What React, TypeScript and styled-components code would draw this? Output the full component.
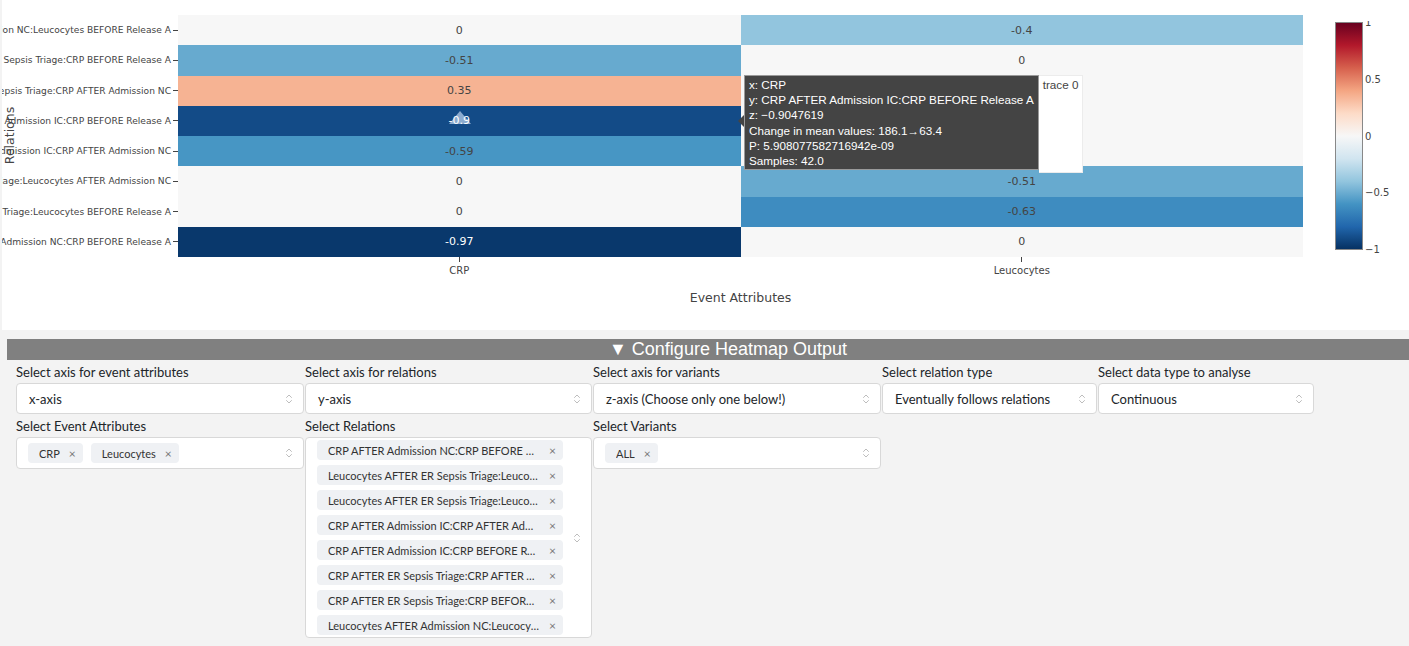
import React from "react";
import styled, { createGlobalStyle } from "styled-components";
import { ChevronsUpDown } from "lucide-react";

interface HeatRow {
  label: string;
  values: number[];
}

const columns = ["CRP", "Leucocytes"];

const rows: HeatRow[] = [
  { label: "Leucocytes AFTER Admission NC:Leucocytes BEFORE Release A", values: [0, -0.4] },
  { label: "CRP AFTER ER Sepsis Triage:CRP BEFORE Release A", values: [-0.51, 0] },
  { label: "CRP AFTER ER Sepsis Triage:CRP AFTER Admission NC", values: [0.35, 0] },
  { label: "CRP AFTER Admission IC:CRP BEFORE Release A", values: [-0.9, 0] },
  { label: "CRP AFTER Admission IC:CRP AFTER Admission NC", values: [-0.59, 0] },
  { label: "Leucocytes AFTER ER Sepsis Triage:Leucocytes AFTER Admission NC", values: [0, -0.51] },
  { label: "Leucocytes AFTER ER Sepsis Triage:Leucocytes BEFORE Release A", values: [0, -0.63] },
  { label: "CRP AFTER Admission NC:CRP BEFORE Release A", values: [-0.97, 0] },
];

const relations = [
  "CRP AFTER Admission NC:CRP BEFORE Release A",
  "Leucocytes AFTER ER Sepsis Triage:Leucocytes AFTER Admission NC",
  "Leucocytes AFTER ER Sepsis Triage:Leucocytes BEFORE Release A",
  "CRP AFTER Admission IC:CRP AFTER Admission NC",
  "CRP AFTER Admission IC:CRP BEFORE Release A",
  "CRP AFTER ER Sepsis Triage:CRP AFTER Admission NC",
  "CRP AFTER ER Sepsis Triage:CRP BEFORE Release A",
  "Leucocytes AFTER Admission NC:Leucocytes BEFORE Release A",
];

// colorbrewer RdBu, from -1 to 1
const RDBU = [
  [5, 48, 97],
  [33, 102, 172],
  [67, 147, 195],
  [146, 197, 222],
  [209, 229, 240],
  [247, 247, 247],
  [253, 219, 199],
  [244, 165, 130],
  [214, 96, 77],
  [178, 24, 43],
  [103, 0, 31],
];

const colorFor = (v: number) => {
  const t = ((v + 1) / 2) * (RDBU.length - 1);
  const i = Math.min(Math.floor(t), RDBU.length - 2);
  const f = t - i;
  const c = RDBU[i].map((a, k) => Math.round(a + (RDBU[i + 1][k] - a) * f));
  return `rgb(${c.join(",")})`;
};

const fmt = (v: number) => (v === 0 ? "0" : String(v));

const Colorbar = () => (
  <ColorbarSvg width="80" height="240" viewBox="0 0 80 240">
    <defs>
      <linearGradient id="rdbu" x1="0" y1="0" x2="0" y2="1">
        {RDBU.slice()
          .reverse()
          .map((c, i) => (
            <stop key={i} offset={`${i * 10}%`} stopColor={`rgb(${c.join(",")})`} />
          ))}
      </linearGradient>
    </defs>
    <rect x="0.5" y="1.5" width="27" height="227" fill="url(#rdbu)" stroke="#888" strokeWidth="1" />
    {["1", "0.5", "0", "\u22120.5", "\u22121"].map((t, i) => (
      <text key={t} x="30" y={1.5 + i * 56.75 + 3.5} fontSize="10" fill="#444" fontFamily="DejaVu Sans, sans-serif">
        {t}
      </text>
    ))}
  </ColorbarSvg>
);

const Chevron = () => <ChevronsUpDown size={12} strokeWidth={1.4} color="#a0a0a0" />;

const App = () => {
  return (
    <Page>
      <GlobalStyle />
      <PlotPanel>
        <YAxis>
          <YTitle>Relations</YTitle>
          {rows.map((r) => (
            <YTickRow key={r.label}>
              <YTickLabel>{r.label}</YTickLabel>
              <YTick />
            </YTickRow>
          ))}
        </YAxis>
        <Heatmap>
          {rows.map((r) =>
            r.values.map((v, j) => (
              <Cell key={r.label + j} $dark={Math.abs(v) > 0.75} style={{ background: colorFor(v) }}>
                <CellText>{fmt(v)}</CellText>
              </Cell>
            ))
          )}
        </Heatmap>
        <ColorbarCol>
          <Colorbar />
        </ColorbarCol>
        <XTicks>
          {columns.map((c) => (
            <XTickCol key={c}>
              <XTick />
              <TickLabel>{c}</TickLabel>
            </XTickCol>
          ))}
        </XTicks>
        <XTitle>Event Attributes</XTitle>

        <Cursor width="24" height="16" viewBox="0 0 24 16">
          <polygon points="12,1 23,14 1,14" fill="rgba(170,195,225,0.8)" />
        </Cursor>

        <Hover>
          <HoverArrow />
          <HoverBox>
            <div>x: CRP</div>
            <div>y: CRP AFTER Admission IC:CRP BEFORE Release A</div>
            <div>z: −0.9047619</div>
            <div>Change in mean values: 186.1→63.4</div>
            <div>P: 5.908077582716942e-09</div>
            <div>Samples: 42.0</div>
          </HoverBox>
          <HoverName>trace 0</HoverName>
        </Hover>
      </PlotPanel>

      <ConfigBar>▼ Configure Heatmap Output</ConfigBar>

      <Form>
        <Field>
          <Label>Select axis for event attributes</Label>
          <SelectBox>
            <span>x-axis</span>
            <Chevron />
          </SelectBox>
        </Field>
        <Field>
          <Label>Select axis for relations</Label>
          <SelectBox>
            <span>y-axis</span>
            <Chevron />
          </SelectBox>
        </Field>
        <Field>
          <Label>Select axis for variants</Label>
          <SelectBox>
            <span>z-axis (Choose only one below!)</span>
            <Chevron />
          </SelectBox>
        </Field>
        <Field>
          <Label>Select relation type</Label>
          <SelectBox>
            <span>Eventually follows relations</span>
            <Chevron />
          </SelectBox>
        </Field>
        <Field>
          <Label>Select data type to analyse</Label>
          <SelectBox>
            <span>Continuous</span>
            <Chevron />
          </SelectBox>
        </Field>

        <Field>
          <Label>Select Event Attributes</Label>
          <MultiBox>
            <Chips>
              {columns.map((c) => (
                <Chip key={c}>
                  <ChipText>{c}</ChipText>
                  <ChipRemove>×</ChipRemove>
                </Chip>
              ))}
            </Chips>
            <Chevron />
          </MultiBox>
        </Field>
        <Field>
          <Label>Select Relations</Label>
          <MultiBox $stacked>
            <Chips>
              {relations.map((r) => (
                <Chip key={r}>
                  <ChipText>{r}</ChipText>
                  <ChipRemove>×</ChipRemove>
                </Chip>
              ))}
            </Chips>
            <Chevron />
          </MultiBox>
        </Field>
        <Field>
          <Label>Select Variants</Label>
          <MultiBox>
            <Chips>
              <Chip>
                <ChipText>ALL</ChipText>
                <ChipRemove>×</ChipRemove>
              </Chip>
            </Chips>
            <Chevron />
          </MultiBox>
        </Field>
      </Form>
    </Page>
  );
};

const GlobalStyle = createGlobalStyle`
  html, body {
    margin: 0;
    padding: 0;
    background: #f3f3f3;
  }
  body {
    font-family: Lato, "Noto Sans", sans-serif;
    overflow: hidden;
  }
`;

const Page = styled.div`
  width: 1409px;
`;

const PlotPanel = styled.div`
  position: relative;
  margin-left: 2px;
  height: 330px;
  box-sizing: border-box;
  padding-top: 15px;
  background: #fff;
  display: grid;
  grid-template-columns: 176px 1125px 1fr;
  grid-template-rows: 242px auto auto;
  align-content: start;
  font-family: "DejaVu Sans", Verdana, sans-serif;
  color: #444;
`;

const YAxis = styled.div`
  position: relative;
  min-width: 0;
  display: grid;
  grid-template-columns: minmax(0, 1fr);
  grid-template-rows: repeat(8, 1fr);
  overflow: hidden;
`;

const YTitle = styled.div`
  position: absolute;
  left: -23px;
  top: 113px;
  width: 60px;
  text-align: center;
  font-size: 12.5px;
  transform: rotate(-90deg);
  color: #444;
`;

const YTickRow = styled.div`
  min-width: 0;
  overflow: hidden;
  display: flex;
  justify-content: flex-end;
  align-items: center;
  white-space: nowrap;
`;

const TickLabel = styled.span`
  flex: none;
  font-size: 10px;
  color: #444;
  white-space: nowrap;
`;

const YTickLabel = styled(TickLabel)`
  font-size: 9.1px;
`;

const YTick = styled.span`
  flex: none;
  width: 5px;
  height: 1px;
  margin-left: 2px;
  background: #444;
`;

const Heatmap = styled.div`
  display: grid;
  grid-template-columns: repeat(2, 1fr);
  grid-template-rows: repeat(8, 1fr);
`;

const Cell = styled.div<{ $dark: boolean }>`
  display: flex;
  align-items: center;
  justify-content: center;
  font-size: 11px;
  color: ${(p) => (p.$dark ? "#fff" : "#444")};
`;

const CellText = styled.span`
  position: relative;
  z-index: 2;
`;

const ColorbarCol = styled.div`
  grid-row: 1 / 4;
  grid-column: 3;
  padding: 6px 0 0 32px;
`;

const ColorbarSvg = styled.svg`
  display: block;
`;

const XTicks = styled.div`
  grid-column: 2;
  display: grid;
  grid-template-columns: repeat(2, 1fr);
`;

const XTickCol = styled.div`
  display: flex;
  flex-direction: column;
  align-items: center;
`;

const XTick = styled.span`
  width: 1px;
  height: 5px;
  background: #444;
  margin-bottom: 3px;
`;

const XTitle = styled.div`
  grid-column: 2;
  text-align: center;
  font-size: 12.5px;
  margin-top: 14px;
`;

const Cursor = styled.svg`
  position: absolute;
  z-index: 1;
  left: 446px;
  top: 110px;
`;

const Hover = styled.div`
  position: absolute;
  z-index: 3;
  left: 736px;
  top: 75px;
  display: flex;
  align-items: flex-start;
  font-family: "Liberation Sans", Arial, sans-serif;
  font-size: 11.7px;
`;

const HoverArrow = styled.span`
  margin-top: 40px;
  width: 0;
  height: 0;
  border-top: 6px solid transparent;
  border-bottom: 6px solid transparent;
  border-right: 6px solid #444;
`;

const HoverBox = styled.div`
  background: #444;
  color: #fff;
  border: 1px solid #9a9a9a;
  padding: 1px 4px 1px 4px;
  line-height: 15.2px;
  white-space: nowrap;
`;

const HoverName = styled.div`
  background: #fff;
  color: #444;
  height: 94px;
  padding: 1px 4px;
  line-height: 15.2px;
  border: 1px solid #ececec;
  border-left: none;
`;

const ConfigBar = styled.div`
  margin: 9px 0 0 7px;
  height: 21px;
  line-height: 21px;
  padding-left: 40px;
  background: #808080;
  color: #fff;
  text-align: center;
  font-family: "Liberation Sans", Arial, sans-serif;
  font-size: 18px;
`;

const Form = styled.div`
  display: grid;
  grid-template-columns: 289px 288px 289px 216px 217px;
  row-gap: 3px;
  padding: 3px 0 0 16px;
  align-items: start;
`;

const Field = styled.div`
  display: flex;
  flex-direction: column;
`;

const Label = styled.label`
  font-size: 13px;
  line-height: 18px;
  margin-bottom: 2px;
  color: #212529;
`;

const SelectBox = styled.div`
  width: calc(100% - 1px);
  height: 31px;
  box-sizing: border-box;
  display: flex;
  align-items: center;
  justify-content: space-between;
  padding: 0 8px 0 12px;
  background: #fff;
  border: 1px solid #d8d8d8;
  border-radius: 4px;
  font-size: 13px;
  color: #212529;
`;

const MultiBox = styled.div<{ $stacked?: boolean }>`
  width: calc(100% - 1px);
  box-sizing: border-box;
  display: flex;
  align-items: center;
  padding: ${(p) => (p.$stacked ? "2px 8px 2px 11px" : "5px 8px 5px 11px")};
  background: #fff;
  border: 1px solid #d8d8d8;
  border-radius: 4px;
`;

const Chips = styled.div`
  flex: 1;
  display: flex;
  flex-wrap: wrap;
  gap: 5px 8px;
`;

const Chip = styled.span`
  display: inline-flex;
  align-items: center;
  height: 20px;
  max-width: 246px;
  box-sizing: border-box;
  padding: 0 7px 0 11px;
  background: #eff1f4;
  border-radius: 4px;
  font-size: 11px;
  color: #333;
`;

const ChipText = styled.span`
  min-width: 0;
  overflow: hidden;
  text-overflow: ellipsis;
  white-space: nowrap;
`;

const ChipRemove = styled.span`
  flex: none;
  margin-left: 9px;
  font-size: 12px;
  color: #777;
`;

export default App;
